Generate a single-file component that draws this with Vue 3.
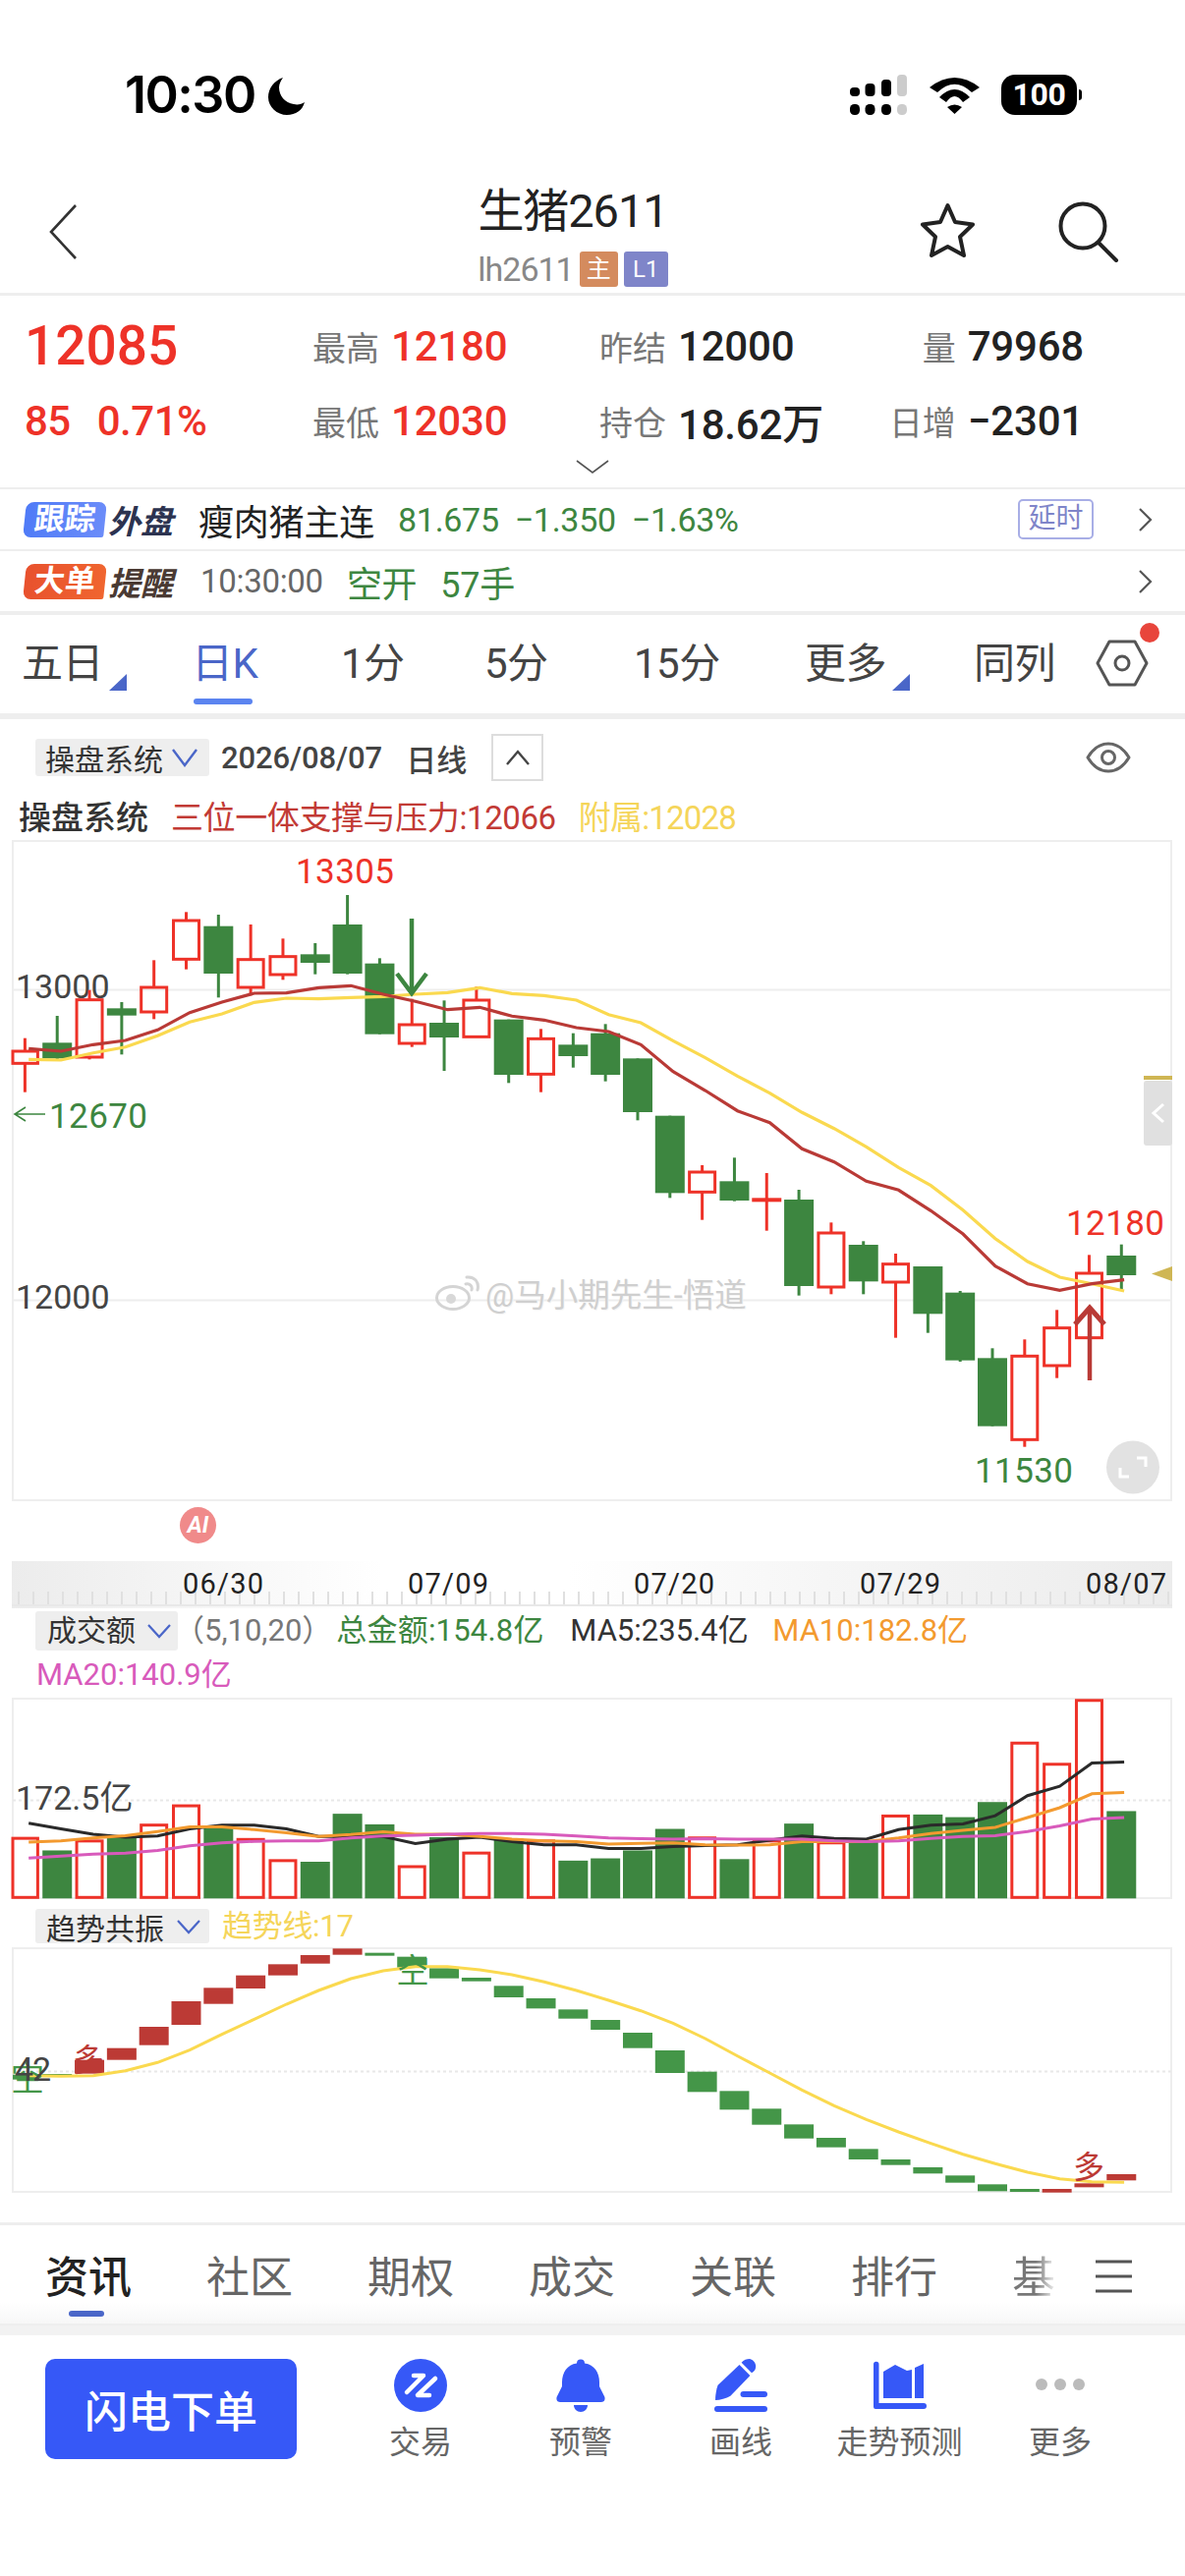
<script setup>
const cx = i => 25.4 + 32.82 * i
const lx = i => 29.2 + 32.79 * i
const ky = z => 860 + z / 3
const vy = z => 1370 + z / 2.6
const ty = z => 1950 + z / 3

// [colour, wickTop, bodyTop, bodyBottom, wickBottom] in measuring units
const rawCandles = [
  ['r',590,630,667,755],['g',522,604,652,655],['r',443,473,648,655],['g',480,499,521,640],
  ['r',352,435,510,532],['r',205,231,349,380],['g',213,248,393,466],['r',243,350,435,460],
  ['r',286,341,396,412],['g',300,334,360,395],['g',153,243,393,395],['g',346,362,578,578],
  ['r',470,549,606,617],['g',475,543,588,690],['r',433,474,586,586],['g',533,533,702,727],
  ['r',562,592,700,755],['g',575,610,645,680],['g',547,575,702,722],['g',652,652,816,841],
  ['g',827,827,1063,1078],['r',978,999,1060,1145],['g',955,1027,1086,1088],['d',1002,1078,1090,1178],
  ['g',1053,1083,1347,1376],['r',1153,1185,1350,1372],['g',1210,1221,1333,1372],['r',1248,1280,1335,1505],
  ['g',1287,1287,1432,1490],['g',1362,1367,1574,1578],['g',1537,1567,1775,1775],['r',1510,1561,1816,1838],
  ['r',1420,1475,1590,1628],['r',1252,1308,1505,1505],['g',1220,1254,1314,1358]
]
const candles = rawCandles.map((c, i) => ({
  kind: c[0], x: cx(i), wt: ky(c[1]), bt: ky(c[2]), bb: ky(c[3]), wb: ky(c[4])
}))
const poly = (vals, fy) => vals.map((v, i) => `${lx(i).toFixed(1)},${fy(v).toFixed(1)}`).join(' ')

const redLine = poly([622,630,610,597,565,512,480,453,452,436,430,456,478,503,496,523,535,558,570,610,692,750,812,848,928,968,1027,1054,1117,1188,1286,1340,1360,1340,1328], ky)
const yellowLine = poly([655,657,635,617,583,541,516,481,468,470,466,463,456,451,436,454,460,474,518,543,598,650,706,758,817,866,922,985,1040,1115,1202,1272,1320,1340,1362], ky)

const volTops = [1303,1335,1310,1298,1268,1217,1272,1306,1362,1365,1238,1266,1378,1300,1342,1304,1310,1362,1356,1335,1278,1302,1358,1310,1264,1315,1310,1244,1240,1247,1207,1051,1107,938,1231]
const bars = volTops.map((t, i) => ({
  red: rawCandles[i][0] !== 'g', x: cx(i), y: vy(t), h: vy(1462) - vy(t)
}))
const vBlack = poly([1263,1278,1292,1300,1297,1278,1268,1268,1278,1298,1298,1298,1317,1305,1300,1312,1320,1320,1330,1330,1325,1322,1320,1308,1297,1303,1305,1280,1268,1265,1243,1190,1165,1104,1101], vy)
const vOrange = poly([1313,1310,1302,1296,1285,1273,1273,1280,1288,1298,1293,1286,1292,1292,1298,1305,1310,1312,1318,1316,1315,1320,1321,1320,1312,1312,1312,1302,1290,1282,1274,1248,1222,1185,1182], vy)
const vPink = poly([1355,1350,1345,1342,1335,1323,1315,1311,1310,1310,1302,1297,1295,1292,1290,1290,1292,1297,1302,1304,1305,1304,1305,1305,1305,1310,1312,1310,1303,1298,1296,1285,1270,1252,1248], vy)

const blocks = [
  ['g',485,500],['g',483,488],['r',440,482],['r',404,440],['r',339,395],['r',261,333],['r',220,269],
  ['r',182,222],['r',148,182],['r',120,146],['r',100,119],['g',113,122],['g',125,158],['g',160,191],
  ['g',189,200],['g',214,249],['g',252,283],['g',286,314],['g',318,348],['g',357,404],['g',411,480],
  ['g',476,538],['g',535,592],['g',589,638],['g',637,680],['g',678,707],['g',712,744],['g',744,761],
  ['g',768,787],['g',793,815],['g',820,841],['g',834,843],['r',834,845],['r',817,829],['r',789,808]
].map((b, i) => ({ red: b[0] === 'r', x: cx(i) - 15, y: ty(b[1]), h: ty(b[2]) - ty(b[1]) }))
const trendLine = poly([488,490,488,473,448,410,362,316,270,228,192,168,155,155,165,180,202,228,258,290,328,375,428,480,532,580,622,660,695,728,757,783,803,812,814], ty)

const axisTicks = Array.from({ length: 79 }, (_, i) => 18 + i * 15)
const dates = [
  { t: '06/30', x: 186 }, { t: '07/09', x: 415 }, { t: '07/20', x: 645 }, { t: '07/29', x: 875 }, { t: '08/07', x: 1105 }
]
const intervalTabs = [
  { t: '五日', tri: true }, { t: '日K', active: true }, { t: '1分' }, { t: '5分' }, { t: '15分' }, { t: '更多', tri: true }, { t: '同列' }
]
const infoTabs = ['资讯', '社区', '期权', '成交', '关联', '排行', '基']
</script>

<template>
  <div class="page">
    <header class="status">
      <div class="clock">10:30</div>
      <svg class="moon" width="40" height="40" viewBox="0 0 40 40"><path d="M17 1C8 4 2 12 2 21C2 31 11 39 21 39C30 39 37 34 39 26C36 28 32 29 28 28C19 27 13 19 13 11C13 7 15 4 17 1Z" fill="#000"/></svg>
      <div class="status-right">
        <svg width="60" height="42" viewBox="0 0 60 42">
          <rect x="0" y="13" width="10" height="9" rx="4" fill="#000"/><rect x="15.5" y="9" width="10" height="13" rx="4" fill="#000"/><rect x="32" y="5" width="10" height="17" rx="4" fill="#000"/><rect x="48" y="0" width="10" height="22" rx="4" fill="#ccc"/>
          <rect x="0" y="30" width="10" height="11" rx="4.5" fill="#000"/><rect x="15.5" y="30" width="10" height="11" rx="4.5" fill="#000"/><rect x="32" y="30" width="10" height="11" rx="4.5" fill="#000"/><rect x="48" y="30" width="10" height="11" rx="4.5" fill="#ccc"/>
        </svg>
        <svg class="wifi" width="51" height="38" viewBox="0 0 51 38">
          <path d="M0 10Q25.5 -10 51 10L43 15Q25.5 -1.6 8 15Z" fill="#000"/>
          <path d="M10 20Q25.5 4 41 20L34 25Q25.5 13 17 25Z" fill="#000"/>
          <path d="M18 30Q25.5 25 33 30L25.5 37Z" fill="#000"/>
        </svg>
        <div class="battery"><span>100</span></div>
      </div>
    </header>

    <nav class="nav">
      <div class="nav-left">
        <svg width="28" height="56" viewBox="0 0 28 56"><path d="M27 1L2 28L27 55" fill="none" stroke="#333" stroke-width="2.6"/></svg>
      </div>
      <div class="nav-title">
        <div class="title">生猪2611</div>
        <div class="subtitle">
          <span>lh2611</span><em class="tag tag-o">主</em><em class="tag tag-p">L1</em>
        </div>
      </div>
      <div class="nav-right">
        <svg width="60" height="62" viewBox="0 0 60 62"><path d="M29.5 4L37 21L55 23.5L42 36L46 55L29.5 46L13 55L17 36L4 23.5L22 21Z" fill="none" stroke="#222" stroke-width="4" stroke-linejoin="round"/></svg>
        <svg width="62" height="62" viewBox="0 0 62 62"><circle cx="25" cy="25" r="22.5" fill="none" stroke="#222" stroke-width="4"/><path d="M41 42L59 60" stroke="#222" stroke-width="4" stroke-linecap="round"/></svg>
      </div>
    </nav>

    <section class="quote">
      <div class="last">12085</div>
      <div class="cell"><span class="lbl">最高</span><b class="up">12180</b></div>
      <div class="cell"><span class="lbl">昨结</span><b>12000</b></div>
      <div class="cell end"><span class="lbl">量</span><b>79968</b></div>
      <div class="change"><span>85</span><span>0.71%</span></div>
      <div class="cell"><span class="lbl">最低</span><b class="up">12030</b></div>
      <div class="cell"><span class="lbl">持仓</span><b>18.62万</b></div>
      <div class="cell end"><span class="lbl">日增</span><b>−2301</b></div>
      <svg class="more" width="34" height="14" viewBox="0 0 34 14"><path d="M1 1L17 13L33 1" fill="none" stroke="#555" stroke-width="1.6"/></svg>
    </section>

    <div class="ticker">
      <span class="badge blue">跟踪</span><span class="badge-tail navy">外盘</span>
      <span class="t-name">瘦肉猪主连</span>
      <span class="t-g t-a">81.675</span><span class="t-g">−1.350</span><span class="t-g">−1.63%</span>
      <span class="delay">延时</span>
      <svg class="arrow" width="16" height="24" viewBox="0 0 16 24"><path d="M2 1L13 12L2 23" fill="none" stroke="#555" stroke-width="2.2"/></svg>
    </div>
    <div class="ticker thick">
      <span class="badge orange">大单</span><span class="badge-tail brown">提醒</span>
      <span class="t-time">10:30:00</span>
      <span class="t-g t-open">空开</span><span class="t-g t-hand">57手</span>
      <svg class="arrow auto" width="16" height="24" viewBox="0 0 16 24"><path d="M2 1L13 12L2 23" fill="none" stroke="#555" stroke-width="2.2"/></svg>
    </div>

    <div class="intervals">
      <div v-for="tab in intervalTabs" :key="tab.t" class="itab" :class="{ active: tab.active, tri: tab.tri }">{{ tab.t }}</div>
      <div class="hexbox">
        <svg width="54" height="48" viewBox="0 0 54 48"><path d="M2 24L14 2H40L52 24L40 46H14Z" fill="none" stroke="#555" stroke-width="3" stroke-linejoin="round"/><circle cx="27" cy="24" r="7" fill="none" stroke="#555" stroke-width="3"/></svg>
        <i class="dot"></i>
      </div>
    </div>

    <div class="chart-head">
      <div class="chip c1">操盘系统<svg width="28" height="20" viewBox="0 0 28 20"><path d="M2 2L14 18L26 2" fill="none" stroke="#4a66c8" stroke-width="2.4"/></svg></div>
      <span class="date">2026/08/07</span>
      <span class="cycle">日线</span>
      <div class="upbtn"><svg width="26" height="16" viewBox="0 0 26 16"><path d="M2 15L13 2L24 15" fill="none" stroke="#444" stroke-width="2.4"/></svg></div>
      <svg class="eye" width="46" height="32" viewBox="0 0 46 32"><path d="M2 16C8 6 15 2 23 2S38 6 44 16C38 26 31 30 23 30S8 26 2 16Z" fill="none" stroke="#666" stroke-width="3" stroke-linejoin="round"/><circle cx="23" cy="16" r="6.5" fill="none" stroke="#666" stroke-width="3"/></svg>
    </div>
    <div class="legend">
      <b>操盘系统</b><span class="lg-r">三位一体支撑与压力:12066</span><span class="lg-y">附属:12028</span>
    </div>

    <div class="kwrap">
      <svg class="chart" width="1206" height="674" viewBox="0 855 1206 674">
        <rect x="13" y="856" width="1179" height="671" fill="#fff" stroke="#eee" stroke-width="2"/>
        <path d="M13 1007.5H1192M13 1323.5H1192" stroke="#eee" stroke-width="2"/>
        <text x="16" y="1016" class="ax">13000</text>
        <text x="16" y="1332" class="ax">12000</text>
        <g v-for="(c, i) in candles" :key="i">
          <template v-if="c.kind === 'g'">
            <rect :x="c.x - 1.5" :y="c.wt" width="3" :height="c.wb - c.wt" fill="#3d8640"/>
            <rect :x="c.x - 15" :y="c.bt" width="30" :height="c.bb - c.bt" fill="#3d8640"/>
          </template>
          <template v-else-if="c.kind === 'd'">
            <rect :x="c.x - 1.5" :y="c.wt" width="3" :height="c.wb - c.wt" fill="#ee3228"/>
            <rect :x="c.x - 15" :y="c.bt" width="30" :height="c.bb - c.bt" fill="#ee3228"/>
          </template>
          <template v-else>
            <rect :x="c.x - 1.5" :y="c.wt" width="3" :height="c.bt - c.wt" fill="#ee3228"/>
            <rect :x="c.x - 1.5" :y="c.bb" width="3" :height="c.wb - c.bb" fill="#ee3228"/>
            <rect :x="Math.max(c.x - 13, 13)" :y="c.bt" :width="c.x - 13 < 13 ? c.x : 26" :height="c.bb - c.bt" fill="none" stroke="#ee3228" stroke-width="3"/>
          </template>
        </g>
        <polyline :points="yellowLine" fill="none" stroke="#fad94f" stroke-width="3.2"/>
        <polyline :points="redLine" fill="none" stroke="#b93a36" stroke-width="3.2"/>
        <path d="M419 935V1008" stroke="#3d8640" stroke-width="4.5"/>
        <path d="M404 991L419 1011L434 991" fill="none" stroke="#3d8640" stroke-width="4.5"/>
        <path d="M1109 1405V1332" stroke="#b93a36" stroke-width="4.5"/>
        <path d="M1094 1348L1109 1331L1124 1348" fill="none" stroke="#b93a36" stroke-width="5"/>
        <text x="301" y="899" class="hi">13305</text>
        <path d="M46 1134H15M26 1127L15 1134L26 1141" fill="none" stroke="#3d8640" stroke-width="1.6"/>
        <text x="50" y="1148" class="lo">12670</text>
        <text x="1085" y="1257" class="hi">12180</text>
        <text x="992" y="1509" class="lo">11530</text>
        <rect x="1164" y="1095" width="29" height="4" fill="#cfb654"/>
        <rect x="1164" y="1100" width="29" height="66" rx="3" fill="#e0e0e0"/>
        <path d="M1184 1124L1174 1133L1184 1142" fill="none" stroke="#fff" stroke-width="3"/>
        <path d="M1193 1289V1304L1172 1296.5Z" fill="#cfb654"/>
        <circle cx="1153" cy="1493.5" r="27" fill="#e2e2e2"/>
        <path d="M1157 1484H1166V1493M1149 1503H1140V1494" fill="none" stroke="#fff" stroke-width="3"/>
      </svg>
      <div class="wm">
        <svg width="46" height="36" viewBox="0 0 46 36"><ellipse cx="18" cy="23" rx="16.5" ry="11.5" fill="none" stroke="#d4d4d4" stroke-width="3"/><circle cx="16" cy="24" r="5" fill="#d8d8d8"/><path d="M31 9C35 8 38 11 37 15M32 2C40 1 45 7 43 15" fill="none" stroke="#d4d4d4" stroke-width="3" stroke-linecap="round"/></svg>
        <span>@马小期先生-悟道</span>
      </div>
    </div>

    <div class="ai-row"><span class="ai">AI</span></div>

    <div class="axis">
      <svg width="1181" height="48" viewBox="12 1589 1181 48">
        <rect v-for="x in axisTicks" :key="x" :x="x" y="1620" width="2" height="15" fill="#e0e0e0"/>
        <rect x="12" y="1633" width="1181" height="2" fill="#e8e8e8"/>
        <text v-for="d in dates" :key="d.t" :x="d.x" y="1622" class="dt">{{ d.t }}</text>
      </svg>
    </div>

    <div class="ind-head">
      <div class="chip c2">成交额<svg width="26" height="16" viewBox="0 0 26 16"><path d="M2 2L13 14L24 2" fill="none" stroke="#4a66c8" stroke-width="2.2"/></svg></div>
      <span class="params">（5,10,20）</span>
      <span class="vg">总金额:154.8亿</span>
      <span class="vk">MA5:235.4亿</span>
      <span class="vo">MA10:182.8亿</span>
      <span class="vp">MA20:140.9亿</span>
    </div>

    <svg class="chart" width="1206" height="206" viewBox="0 1728 1206 206">
      <rect x="13" y="1729" width="1179" height="203" fill="#fff" stroke="#eee" stroke-width="2"/>
      <path d="M13 1832.5H1192" stroke="#e8e8e8" stroke-width="2" stroke-dasharray="3 3"/>
      <text x="16" y="1842" class="ax">172.5亿</text>
      <g v-for="(b, i) in bars" :key="i">
        <rect v-if="b.red" :x="Math.max(b.x - 13, 13)" :y="b.y" :width="b.x - 13 < 13 ? b.x : 26" :height="b.h - 1" fill="none" stroke="#ee3228" stroke-width="3"/>
        <rect v-else :x="b.x - 15" :y="b.y" width="30" :height="b.h" fill="#3d8640"/>
      </g>
      <polyline :points="vBlack" fill="none" stroke="#2a2a2a" stroke-width="3"/>
      <polyline :points="vOrange" fill="none" stroke="#f39a2f" stroke-width="3"/>
      <polyline :points="vPink" fill="none" stroke="#d85abb" stroke-width="3"/>
    </svg>

    <div class="trend-head">
      <div class="chip c3">趋势共振<svg width="26" height="16" viewBox="0 0 26 16"><path d="M2 2L13 14L24 2" fill="none" stroke="#4a66c8" stroke-width="2.2"/></svg></div>
      <span class="big">趋势线:17</span>
    </div>

    <svg class="chart" width="1206" height="250" viewBox="0 1982 1206 250">
      <rect x="13" y="1983" width="1179" height="248" fill="#fff" stroke="#eee" stroke-width="2"/>
      <path d="M13 2108.5H1192" stroke="#e8e8e8" stroke-width="2" stroke-dasharray="3 3"/>
      <rect v-for="(b, i) in blocks" :key="i" :x="Math.max(b.x, 13)" :y="b.y" :width="b.x < 13 ? 27 : 30" :height="b.h" :fill="b.red ? '#bc3a35' : '#449648'"/>
      <polyline :points="trendLine" fill="none" stroke="#fad94f" stroke-width="3"/>
      <text x="74" y="2108" class="sig-r">多</text>
      <text x="1092" y="2217" class="sig-r">多</text>
      <text x="11" y="2128" class="sig-g">空</text>
      <text x="403" y="2018" class="sig-g">空</text>
      <text x="15" y="2118" class="ax small">42</text>
    </svg>

    <div class="info-wrap">
      <div class="info-tabs">
        <span v-for="(t, i) in infoTabs" :key="t" class="info" :class="{ on: i === 0, fade: t === '基' }">{{ t }}</span>
      </div>
      <svg class="menu" width="38" height="34" viewBox="0 0 38 34"><path d="M0 2H37M0 17H37M0 32H37" stroke="#555" stroke-width="3"/></svg>
    </div>

    <footer class="bottom">
      <button class="flash">闪电下单</button>
      <div class="tools">
        <div class="tool">
          <svg width="54" height="54" viewBox="0 0 54 54"><circle cx="27" cy="27" r="27" fill="#3658f7"/><path d="M20 17H30L13 34M42 20L24 37H36" fill="none" stroke="#fff" stroke-width="4.5" stroke-linecap="round" stroke-linejoin="round"/></svg>
          <span>交易</span>
        </div>
        <div class="tool">
          <svg width="54" height="54" viewBox="0 0 54 54"><path d="M27 .5a4 4 0 0 1 4 4C41 6 46 14 46 24V28L51 38C52.5 41 51 44 48 44H6C3 44 1.500 41 3 38L8 28V24C8 14 13 6 23 4.500a4 4 0 0 1 4-4Z" fill="#3658f7"/><path d="M20 47H34C34 51 31 54 27 54S20 51 20 47Z" fill="#3658f7"/></svg>
          <span>预警</span>
        </div>
        <div class="tool">
          <svg width="54" height="54" viewBox="0 0 54 54"><path d="M25.500 6L36.400 17L16.400 37.700C12 40 6 42 1 42C1 37 2 31 3.600 26.700Z" fill="#3658f7"/><path d="M27.600 3.700C30 1 33 0 36 0C40 1 43 5 42 9C42 11 40 13 38 14.300Z" fill="#3658f7"/><rect x="26.500" y="33" width="27.500" height="6" rx="3" fill="#3658f7"/><rect y="48" width="54" height="6" rx="3" fill="#3658f7"/></svg>
          <span>画线</span>
        </div>
        <div class="tool">
          <svg width="54" height="54" viewBox="0 0 54 54"><path d="M0 5.500A2.700 2.700 0 0 1 5.500 5.500V45H51A3 3 0 0 1 51 51H2A2 2 0 0 1 0 49Z" fill="#3658f7"/><path d="M10 13L22 6L34 12L39 11V40H10Z" fill="#3658f7"/><path d="M42 9L51 5V40H42Z" fill="#3658f7"/></svg>
          <span>走势预测</span>
        </div>
        <div class="tool">
          <svg width="54" height="54" viewBox="0 0 54 54"><circle cx="8" cy="26" r="6" fill="#bbb"/><circle cx="27" cy="26" r="6" fill="#bbb"/><circle cx="46" cy="26" r="6" fill="#bbb"/></svg>
          <span>更多</span>
        </div>
      </div>
    </footer>
  </div>
</template>

<style>
html, body { margin: 0; background: #fff; }
</style>

<style scoped>
.page { width: 1206px; height: 2622px; overflow: hidden; background: #fff; font-family: Roboto, "Noto Sans CJK SC", sans-serif; color: #222; }
.status { height: 190px; display: flex; align-items: flex-start; padding: 76px 0 0 127px; box-sizing: border-box; }
.clock { font: 600 52px/42px Inter, Roboto, sans-serif; letter-spacing: -1.5px; color: #000; }
.moon { margin: 2px 0 0 11px; }
.status-right { margin-left: auto; margin-right: 110px; display: flex; align-items: flex-start; gap: 21px; }
.wifi { margin-top: 3px; }
.battery { width: 77px; height: 41px; margin-left: 1px; background: #000; border-radius: 14px; display: flex; align-items: center; justify-content: center; color: #fff; font: 700 32px/41px Roboto, sans-serif; letter-spacing: -.3px; position: relative; }
.battery::after { content: ""; position: absolute; right: -5px; top: 15px; width: 3px; height: 11px; background: #000; border-radius: 0 3px 3px 0; }
.nav { height: 108px; display: flex; border-bottom: 3px solid #eee; }
.nav-left { width: 430px; padding: 18px 0 0 50px; box-sizing: border-box; }
.nav-title { width: 306px; display: flex; flex-direction: column; align-items: center; }
.title { font-size: 47px; line-height: 52px; margin-top: -1px; letter-spacing: -1.1px; }
.subtitle { display: flex; align-items: center; margin-top: 15px; color: #888; font-size: 34px; line-height: 36px; gap: 6px; letter-spacing: -1px; }
.tag { font-style: normal; color: #fff; border-radius: 3px; font-size: 25px; line-height: 36px; height: 36px; text-align: center; letter-spacing: 0; }
.tag-o { width: 39px; background: #d48b5e; }
.tag-p { width: 45px; background: #7f85c9; font-size: 24px; }
.nav-right { flex: 1; display: flex; align-items: flex-start; gap: 82px; padding: 15px 0 0 199px; }
.nav-right svg { flex: none; }
.quote { height: 195px; box-sizing: border-box; display: grid; grid-template-columns: 293px 292px 240px 1fr; grid-auto-rows: 76px; padding: 13px 103px 0 25px; position: relative; }
.last { font-size: 55px; font-weight: 500; color: #ee3228; line-height: 76px; }
.cell { display: flex; align-items: center; gap: 12px; font-size: 42px; }
.cell.end { justify-content: flex-end; gap: 12px; }
.cell b { font-weight: 500; letter-spacing: -.2px; }
.lbl { font-size: 34px; color: #777; }
.up { color: #ee3228; }
.change { display: flex; align-items: center; gap: 27px; font-size: 42px; color: #ee3228; font-weight: 500; letter-spacing: -.5px; }
.more { position: absolute; left: 586px; top: 167px; }
.ticker { height: 63px; box-sizing: border-box; border-top: 2px solid #eee; display: flex; align-items: center; padding-left: 25px; font-size: 36px; }
.thick { border-bottom: 4px solid #eee; height: 67px; }
.badge { height: 36px; line-height: 36px; width: 82px; text-align: center; color: #fff; font-size: 31px; font-weight: 700; border-radius: 8px 8px 2px 8px; transform: skewX(-6deg); }
.blue { background: linear-gradient(90deg, #4f7bf7, #6b8cf9); }
.orange { background: linear-gradient(90deg, #e8512e, #f0652f); }
.badge-tail { width: 68px; margin-left: 3px; font-size: 33px; font-weight: 700; font-style: italic; white-space: nowrap; }
.navy { color: #2c3350; }
.brown { color: #4a3a33; }
.t-name { margin-left: 24px; letter-spacing: -.2px; }
.t-g { color: #3d8640; margin-left: 16px; font-size: 34px; letter-spacing: -.3px; }
.t-a { margin-left: 24px; }
.delay { margin-left: auto; width: 77px; height: 41px; box-sizing: border-box; border: 2px solid #a8aee6; border-radius: 5px; text-align: center; color: #7f85c9; font-size: 28px; line-height: 36px; }
.arrow { margin: 0 32px 0 45px; }
.arrow.auto { margin-left: auto; }
.t-time { margin-left: 26px; color: #666; font-size: 33px; letter-spacing: -.3px; }
.t-open { margin-left: 24px; font-size: 36px; }
.t-hand { margin-left: 24px; font-size: 36px; }
.intervals { height: 106px; box-sizing: border-box; border-bottom: 6px solid #eee; display: grid; grid-template-columns: 175px 150px 146px 152px 174px 172px 124px 1fr; padding-left: 22px; align-items: center; font-size: 42px; color: #444; }
.itab { position: relative; line-height: 50px; white-space: nowrap; letter-spacing: -.5px; }
.itab.active { color: #4a66c8; left: -2px; }
.itab.active::after { content: ""; position: absolute; left: 2px; top: 60px; width: 60px; height: 6px; border-radius: 3px; background: #5b84f0; }
.itab.tri::after { content: ""; position: absolute; left: 89px; top: 35px; width: 18px; height: 17px; background: #4a66c8; clip-path: polygon(100% 0, 100% 100%, 0 100%); }
.hexbox { position: relative; margin-top: -2px; width: 54px; }
.hexbox svg { display: block; }
.dot { position: absolute; left: 45px; top: -17px; width: 20px; height: 20px; border-radius: 50%; background: #e8453c; }
.chart-head { height: 78px; display: flex; align-items: center; padding-left: 36px; position: relative; }
.chip { background: #eee; border-radius: 3px; display: flex; align-items: center; color: #333; box-sizing: border-box; }
.c1 { width: 177px; height: 38px; font-size: 30px; padding-left: 10px; gap: 8px; }
.date { margin-left: 12px; font-size: 31px; color: #444; letter-spacing: -.1px; font-weight: 500; }
.cycle { margin-left: 24px; font-size: 31px; color: #444; font-weight: 500; }
.upbtn { margin-left: 25px; width: 53px; height: 48px; box-sizing: border-box; border: 2px solid #ddd; display: flex; align-items: center; justify-content: center; }
.eye { position: absolute; left: 1105px; top: 23px; }
.legend { height: 45px; box-sizing: border-box; padding: 0 0 5px 19px; display: flex; align-items: center; font-size: 33px; white-space: nowrap; }
.legend b { font-weight: 500; color: #333; }
.lg-r { margin-left: 23px; color: #c23a35; letter-spacing: -.4px; }
.lg-y { margin-left: 23px; color: #f5d55a; letter-spacing: -.8px; }
.kwrap { position: relative; height: 674px; }
.chart { display: block; }
.ax { font-size: 34px; fill: #444; }
.ax.small { font-size: 34px; letter-spacing: -1px; }
.hi { font-size: 35px; fill: #ee3228; letter-spacing: .4px; }
.lo { font-size: 35px; fill: #3d8640; letter-spacing: .4px; }
.dt { font-size: 29px; fill: #222; letter-spacing: 1.2px; }
.sig-r { font-size: 32px; fill: #bc3a35; }
.sig-g { font-size: 34px; fill: #449648; }
.wm { position: absolute; left: 443px; top: 437px; display: flex; align-items: center; gap: 5px; color: #cfcfcf; font-size: 32.500px; white-space: nowrap; text-shadow: 1px 1px 1px #f4f4f4; }
.ai-row { height: 60px; position: relative; }
.ai { position: absolute; left: 183px; top: 5px; width: 37px; height: 37px; border-radius: 50%; background: #f08a8a; color: #fff; font: italic 700 23px/37px Roboto, sans-serif; text-align: center; }
.axis { margin: 0 13px 0 12px; height: 48px; background: linear-gradient(90deg, #ececec, #fff 32%, #fff 48%, #f6f6f6 70%, #ececec); }
.axis svg { display: block; }
.ind-head { height: 91px; box-sizing: border-box; display: flex; flex-wrap: wrap; align-content: flex-start; align-items: center; padding: 3px 0 0 36px; font-size: 31px; line-height: 34px; white-space: nowrap; }
.c2 { width: 145px; height: 40px; padding-left: 12px; gap: 11px; font-size: 30px; }
.params { margin-left: -4px; color: #777; }
.vg { color: #3d8640; width: 238px; margin-left: 4px; letter-spacing: .2px; }
.vk { color: #333; width: 206px; }
.vo { color: #f39a2f; }
.vp { color: #d85abb; flex-basis: 100%; margin: 8px 0 0 1px; }
.trend-head { height: 48px; box-sizing: border-box; display: flex; align-items: flex-start; padding: 10px 0 0 36px; }
.c3 { width: 177px; height: 35px; padding-left: 11px; gap: 12px; font-size: 30px; margin-top: -1px; }
.big { font-size: 31px; margin-left: 13px; line-height: 34px; color: #f5d55a; letter-spacing: -.3px; }
.info-wrap { margin-top: 30px; height: 115px; box-sizing: border-box; border-top: 3px solid #eee; position: relative; background: linear-gradient(180deg, #fff 70%, #f7f7f7 89%, #eee 89%, #eee 91%, #f2f2f2 91%); display: flex; padding-top: 29px; }
.info-tabs { display: flex; gap: 76px; padding-left: 46px; width: 1082px; box-sizing: border-box; overflow: hidden; height: 76px; }
.info { font-size: 44px; color: #666; white-space: nowrap; position: relative; line-height: 50px; }
.on { color: #222; font-weight: 500; }
.on::after { content: ""; position: absolute; left: 24px; top: 58px; width: 36px; height: 6px; border-radius: 3px; background: #4a66c8; }
.fade { background: linear-gradient(90deg, #777 55%, #fff 105%); -webkit-background-clip: text; background-clip: text; color: transparent; }
.menu { position: absolute; left: 1115px; top: 35px; }
.bottom { display: flex; padding: 24px 0 0 46px; align-items: flex-start; }
.flash { width: 256px; height: 102px; background: #3658f7; border: none; border-radius: 10px; color: #fff; font: 500 44px "Noto Sans CJK SC", sans-serif; padding: 0; flex: none; }
.tools { display: grid; grid-template-columns: 163px 163px 163px 160px 167px; margin-left: 44.500px; }
.tool { display: flex; flex-direction: column; align-items: center; gap: 11px; font-size: 32px; line-height: 40px; color: #666; white-space: nowrap; }
</style>
